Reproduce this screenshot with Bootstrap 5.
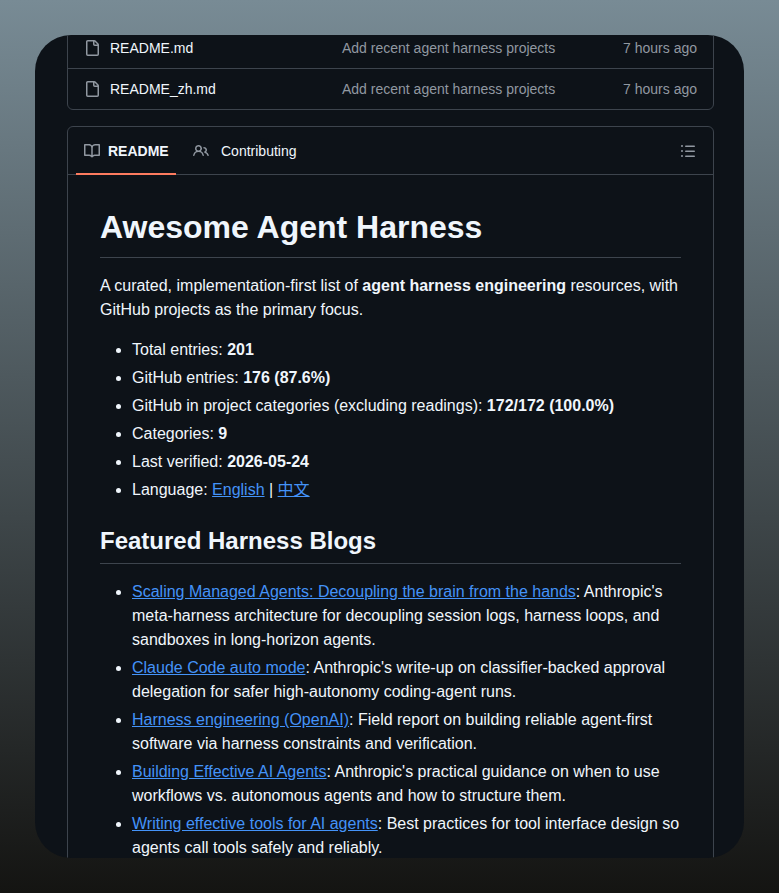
<!DOCTYPE html>
<html lang="en">
<head>
  <meta charset="UTF-8">
  <title>Awesome Agent Harness</title>
  <link href="https://cdn.jsdelivr.net/npm/bootstrap@5.3.3/dist/css/bootstrap.min.css" rel="stylesheet">
  <style>
    html, body { height: 893px; overflow: hidden; }
    body {
      font-family: "Liberation Sans", Arial, sans-serif;
      font-size: 16px;
      line-height: 1.5;
      color: #f0f6fc;
      background: linear-gradient(180deg, #788b95 0%, #141412 100%);
      padding: 35px;
    }
    .app-window {
      width: 709px;
      height: 823px;
      background: #0d1218;
      border-radius: 36px;
      overflow: hidden;
      padding: 0 30px 0 32px;
    }
    .repo-box { border-color: #3d444d !important; border-radius: 6px; background: transparent; }
    .files-box { margin-top: -8px; margin-bottom: 16px; }
    .file-row { height: 40px; padding: 0 16px; font-size: 14px; }
    .file-row + .file-row { height: 41px; border-top: 1px solid #3d444d; }
    .file-row svg, .tab-item svg { fill: #9198a1; flex: none; }
    .file-name { width: 232px; margin-left: 10px; }
    .muted-cell { color: #9198a1; }
    .readme-box { border-bottom-left-radius: 0; border-bottom-right-radius: 0; height: 760px; }
    .readme-head { height: 48px; border-bottom: 1px solid #3d444d; padding: 1px 8px 0; }
    .tab-item { height: 47px; padding: 0 8px; font-size: 14px; color: #f0f6fc; position: relative; }
    .tab-item.on { font-weight: 700; gap: 8px; width: 100px; }
    .tab-item.on::after {
      content: "";
      position: absolute;
      left: 0; right: 0; bottom: 0;
      height: 2px;
      background: #fd7b5f;
    }
    .tab-people { gap: 12px; margin-left: 9px; }
    .toc-btn { margin-right: 1px; }
    .readme-body { padding: 32px; }
    .readme-body h1, .readme-body h2 {
      font-weight: 700;
      line-height: 1.25;
      color: #f0f6fc;
      border-bottom: 1px solid #3d444d;
      margin-bottom: 16px;
    }
    .readme-body h1 { font-size: 32px; padding-bottom: 9.6px; margin-top: 0; }
    .readme-body h2 { font-size: 24px; padding-bottom: 7.2px; margin-top: 24px; }
    .readme-body p { margin-bottom: 16px; }
    .readme-body ul { padding-left: 32px; margin-bottom: 16px; }
    .readme-body li + li { margin-top: 4px; }
    .readme-body a { color: #4493f8; text-decoration: underline; }
    .cjk { font-family: "Liberation Sans", "Noto Sans CJK SC", sans-serif; }
  </style>
</head>
<body>
<div class="app-window">

  <div class="repo-box files-box border">
    <div class="file-row d-flex align-items-center">
      <svg width="16" height="16" viewBox="0 0 16 16"><path d="M2 1.75C2 .784 2.784 0 3.75 0h6.586c.464 0 .909.184 1.237.513l2.914 2.914c.329.328.513.773.513 1.237v9.586A1.75 1.75 0 0 1 13.25 16h-9.5A1.75 1.75 0 0 1 2 14.25Zm1.75-.25a.25.25 0 0 0-.25.25v12.5c0 .138.112.25.25.25h9.5a.25.25 0 0 0 .25-.25V6h-2.75A1.75 1.75 0 0 1 9 4.25V1.5Zm6.75.062V4.25c0 .138.112.25.25.25h2.688l-.011-.013-2.914-2.914-.013-.011Z"/></svg>
      <span class="file-name">README.md</span>
      <span class="muted-cell flex-grow-1">Add recent agent harness projects</span>
      <span class="muted-cell">7 hours ago</span>
    </div>
    <div class="file-row d-flex align-items-center">
      <svg width="16" height="16" viewBox="0 0 16 16"><path d="M2 1.75C2 .784 2.784 0 3.75 0h6.586c.464 0 .909.184 1.237.513l2.914 2.914c.329.328.513.773.513 1.237v9.586A1.75 1.75 0 0 1 13.25 16h-9.5A1.75 1.75 0 0 1 2 14.25Zm1.75-.25a.25.25 0 0 0-.25.25v12.5c0 .138.112.25.25.25h9.5a.25.25 0 0 0 .25-.25V6h-2.75A1.75 1.75 0 0 1 9 4.25V1.5Zm6.75.062V4.25c0 .138.112.25.25.25h2.688l-.011-.013-2.914-2.914-.013-.011Z"/></svg>
      <span class="file-name">README_zh.md</span>
      <span class="muted-cell flex-grow-1">Add recent agent harness projects</span>
      <span class="muted-cell">7 hours ago</span>
    </div>
  </div>

  <div class="repo-box readme-box border">
    <div class="readme-head d-flex align-items-center">
      <div class="tab-item on d-flex align-items-center">
        <svg width="16" height="16" viewBox="0 0 16 16"><path d="M0 1.75A.75.75 0 0 1 .75 1h4.253c1.227 0 2.317.59 3 1.501A3.743 3.743 0 0 1 11.006 1h4.245a.75.75 0 0 1 .75.75v10.5a.75.75 0 0 1-.75.75h-4.507a2.25 2.25 0 0 0-1.591.659l-.622.621a.75.75 0 0 1-1.06 0l-.622-.621A2.25 2.25 0 0 0 5.258 13H.75a.75.75 0 0 1-.75-.75Zm7.251 10.324.004-5.073-.002-2.253A2.25 2.25 0 0 0 5.003 2.5H1.5v9h3.757a3.75 3.75 0 0 1 1.994.574ZM8.755 4.75l-.004 7.322a3.752 3.752 0 0 1 1.992-.572H14.5v-9h-3.495a2.25 2.25 0 0 0-2.25 2.25Z"/></svg>
        <span>README</span>
      </div>
      <div class="tab-item tab-people d-flex align-items-center">
        <svg width="16" height="16" viewBox="0 0 16 16"><path d="M2 5.5a3.5 3.5 0 1 1 5.898 2.549 5.508 5.508 0 0 1 3.034 4.084.75.75 0 1 1-1.482.235 4 4 0 0 0-7.9 0 .75.75 0 0 1-1.482-.236A5.507 5.507 0 0 1 3.102 8.05 3.493 3.493 0 0 1 2 5.5ZM11 4a3.001 3.001 0 0 1 2.22 5.018 5.01 5.01 0 0 1 2.56 3.012.749.749 0 0 1-.885.954.752.752 0 0 1-.549-.514 3.507 3.507 0 0 0-2.522-2.372.75.75 0 0 1-.574-.73v-.352a.75.75 0 0 1 .416-.672A1.5 1.5 0 0 0 11 5.5.75.75 0 0 1 11 4Zm-5.5-.5a2 2 0 1 0-.001 3.999A2 2 0 0 0 5.5 3.5Z"/></svg>
        <span>Contributing</span>
      </div>
      <div class="toc-btn tab-item ms-auto d-flex align-items-center">
        <svg width="16" height="16" viewBox="0 0 16 16"><path d="M5.75 2.5h8.5a.75.75 0 0 1 0 1.5h-8.5a.75.75 0 0 1 0-1.5Zm0 5h8.5a.75.75 0 0 1 0 1.5h-8.5a.75.75 0 0 1 0-1.5Zm0 5h8.5a.75.75 0 0 1 0 1.5h-8.5a.75.75 0 0 1 0-1.5ZM2 14a1 1 0 1 1 0-2 1 1 0 0 1 0 2Zm1-6a1 1 0 1 1-2 0 1 1 0 0 1 2 0ZM2 4a1 1 0 1 1 0-2 1 1 0 0 1 0 2Z"/></svg>
      </div>
    </div>

    <div class="readme-body">
      <h1>Awesome Agent Harness</h1>
      <p>A curated, implementation-first list of <strong>agent harness engineering</strong> resources, with GitHub projects as the primary focus.</p>
      <ul>
        <li>Total entries: <strong>201</strong></li>
        <li>GitHub entries: <strong>176 (87.6%)</strong></li>
        <li>GitHub in project categories (excluding readings): <strong>172/172 (100.0%)</strong></li>
        <li>Categories: <strong>9</strong></li>
        <li>Last verified: <strong>2026-05-24</strong></li>
        <li>Language: <a href="#">English</a> | <a href="#" class="cjk">中文</a></li>
      </ul>
      <h2>Featured Harness Blogs</h2>
      <ul>
        <li><a href="#">Scaling Managed Agents: Decoupling the brain from the hands</a>: Anthropic's meta-harness architecture for decoupling session logs, harness loops, and sandboxes in long-horizon agents.</li>
        <li><a href="#">Claude Code auto mode</a>: Anthropic's write-up on classifier-backed approval delegation for safer high-autonomy coding-agent runs.</li>
        <li><a href="#">Harness engineering (OpenAI)</a>: Field report on building reliable agent-first software via harness constraints and verification.</li>
        <li><a href="#">Building Effective AI Agents</a>: Anthropic's practical guidance on when to use workflows vs. autonomous agents and how to structure them.</li>
        <li><a href="#">Writing effective tools for AI agents</a>: Best practices for tool interface design so agents call tools safely and reliably.</li>
      </ul>
    </div>
  </div>

</div>
<script src="https://cdn.jsdelivr.net/npm/bootstrap@5.3.3/dist/js/bootstrap.bundle.min.js"></script>
</body>
</html>
